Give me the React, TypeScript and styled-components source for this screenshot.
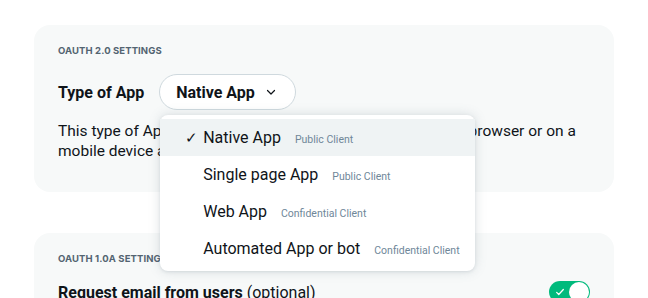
import styled, { createGlobalStyle } from 'styled-components'

const GlobalStyle = createGlobalStyle`
	body {
		margin: 0;
		background: #ffffff;
		font-family: Roboto, 'Noto Sans', sans-serif;
		color: #0f1419;
	}
`

const Page = styled.div`
	display: flex;
	flex-direction: column;
	gap: 41px;
	padding: 25px 34px 0 34px;
	height: 298px;
	box-sizing: border-box;
	overflow: hidden;
`

const Card = styled.section<{ bottom?: number }>`
	background: #f7f9f9;
	border-radius: 16px;
	padding: 19px 24px ${({ bottom }) => bottom ?? 20}px 24px;
	display: flex;
	flex-direction: column;
`

const SectionTitle = styled.h3`
	margin: 0;
	font-family: Inter, Roboto, sans-serif;
	font-size: 9.5px;
	font-weight: 700;
	letter-spacing: 0.1px;
	text-transform: uppercase;
	color: #536471;
	line-height: 14px;
`

const FieldRow = styled.div`
	display: flex;
	align-items: center;
	gap: 15px;
	margin-top: 16px;
`

const FieldLabel = styled.span`
	font-size: 16px;
	font-weight: 700;
`

const SelectWrap = styled.div`
	position: relative;
`

const SelectButton = styled.button`
	display: flex;
	align-items: center;
	gap: 10px;
	height: 36px;
	padding: 0 18px 0 16px;
	border: 1px solid #cfd9de;
	border-radius: 18px;
	background: #ffffff;
	font-family: inherit;
	font-size: 16px;
	font-weight: 700;
	color: #0f1419;
	cursor: pointer;
`

const Menu = styled.ul`
	position: absolute;
	top: 41px;
	left: 1px;
	width: 315px;
	margin: 0;
	padding: 4px 0 4px 0;
	list-style: none;
	background: #ffffff;
	border-radius: 8px;
	box-shadow: 0 0 12px rgba(101, 119, 134, 0.22), 0 1px 3px rgba(101, 119, 134, 0.15);
	z-index: 10;
`

const MenuItem = styled.li<{ selected?: boolean }>`
	display: flex;
	align-items: baseline;
	height: 37px;
	padding: 0 0 0 25px;
	line-height: 37px;
	background: ${({ selected }) => (selected ? '#eff3f4' : 'transparent')};
	cursor: pointer;
`

const Check = styled.span`
	width: 18px;
	font-size: 15px;
`

const ItemName = styled.span`
	font-size: 16px;
	color: #0f1419;
`

const ItemKind = styled.span`
	margin-left: 14px;
	font-size: 10.5px;
	color: #6f8799;
`

const Description = styled.p`
	margin: 11px 0 0 0;
	font-size: 15.5px;
	line-height: 20px;
	max-width: 525px;
`

const ToggleRow = styled.div`
	display: flex;
	align-items: center;
	justify-content: space-between;
	margin-top: 15px;
`

const ToggleLabel = styled.span`
	font-size: 16px;
	font-weight: 700;
	& > em {
		font-style: normal;
		font-weight: 400;
	}
`

const Toggle = styled.span`
	display: flex;
	align-items: center;
	justify-content: space-between;
	width: 41px;
	height: 22px;
	box-sizing: border-box;
	padding: 0 1px 0 6px;
	border-radius: 11px;
	background: #00ba7c;
`

const Knob = styled.span`
	width: 20px;
	height: 20px;
	border-radius: 50%;
	background: #ffffff;
`

const apps = [
	{ name: 'Native App', kind: 'Public Client' },
	{ name: 'Single page App', kind: 'Public Client' },
	{ name: 'Web App', kind: 'Confidential Client' },
	{ name: 'Automated App or bot', kind: 'Confidential Client' },
]

const App = () => {
	const selected = 'Native App'

	return (
		<>
			<GlobalStyle />
			<Page>
				<Card bottom={31}>
					<SectionTitle>OAuth 2.0 Settings</SectionTitle>
					<FieldRow>
						<FieldLabel>Type of App</FieldLabel>
						<SelectWrap>
							<SelectButton>
								{selected}
								<svg width='12' height='12' viewBox='0 0 24 24' fill='none' stroke='#0f1419' strokeWidth='2.4' strokeLinecap='round' strokeLinejoin='round'>
									<path d='M5 9l7 7 7-7' />
								</svg>
							</SelectButton>
							<Menu>
								{apps.map(app => (
									<MenuItem key={app.name} selected={app.name === selected}>
										<Check>{app.name === selected ? '✓' : ''}</Check>
										<ItemName>{app.name}</ItemName>
										<ItemKind>{app.kind}</ItemKind>
									</MenuItem>
								))}
							</Menu>
						</SelectWrap>
					</FieldRow>
					<Description>
						This type of App is a public client that runs entirely in a web browser or on a
						mobile device and cannot keep a client secret.
					</Description>
				</Card>
				<Card>
					<SectionTitle>OAuth 1.0a Settings</SectionTitle>
					<ToggleRow>
						<ToggleLabel>
							Request email from users <em>(optional)</em>
						</ToggleLabel>
						<Toggle>
							<svg width='10' height='10' viewBox='0 0 24 24' fill='none' stroke='#ffffff' strokeWidth='3' strokeLinecap='round' strokeLinejoin='round'>
								<path d='M4 13l5 5L20 6' />
							</svg>
							<Knob />
						</Toggle>
					</ToggleRow>
				</Card>
			</Page>
		</>
	)
}

export default App
